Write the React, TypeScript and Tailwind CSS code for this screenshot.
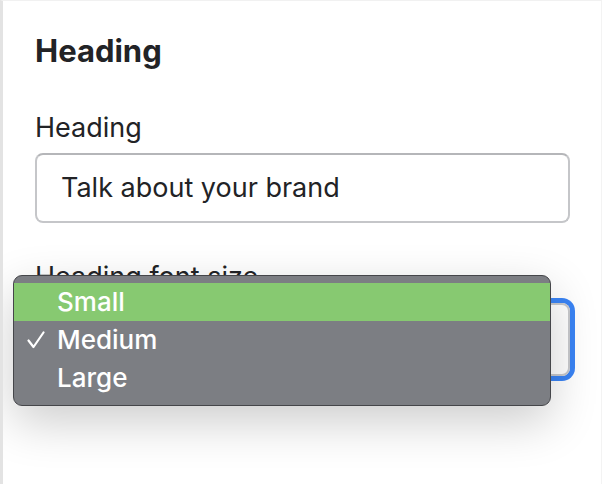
import { useState } from "react";

const options = ["Small", "Medium", "Large"];

export default function App() {
  const [selected] = useState("Medium");
  const [hovered] = useState("Small");

  return (
    <div
      className="relative w-[602px] h-[484px] overflow-hidden bg-white border-l-[3px] border-l-[#e3e3e3] border-t border-t-[#f1f1f1] border-r border-r-[#f3f3f3]"
      style={{ fontFamily: "Inter, 'Noto Sans', sans-serif" }}
    >
      <div className="px-[32px] pt-[31px]">
        {/* Section title */}
        <h2 className="text-[31px] leading-[38px] font-bold text-[#222326]">Heading</h2>

        {/* Heading text */}
        <label className="block mt-[41px] text-[27px] leading-[34px] text-[#222326]">Heading</label>
        <div className="mt-[8px] h-[70px] w-[535px] rounded-[8px] border-2 border-[#c5c6c9] border-t-[#b5b6b9] flex items-center px-[24px]">
          <span className="text-[27px] leading-[34px] text-[#222326]">Talk about your brand</span>
        </div>

        {/* Font size select (value hidden under the open menu) */}
        <label className="block mt-[37px] text-[27px] leading-[34px] text-[#222326]">Heading font size</label>
        <div className="mt-[9px] h-[73px] w-[535px] rounded-[8px] border-2 border-[#c8c9cc] ring-[5px] ring-[#3a84f5]" />
      </div>

      {/* Native-style dropdown menu */}
      <div className="absolute left-[10px] top-[274px] w-[538px] rounded-[9px] border border-[#45464a] bg-[#7c7e83] pt-[7px] pb-[8px] shadow-[0_16px_48px_rgba(0,0,0,0.2)]">
        {options.map((o) => (
          <div
            key={o}
            className={`relative h-[38px] flex items-center pl-[43px] text-[26px] leading-[32px] font-medium text-white ${
              o === hovered ? "bg-[#87c971]" : ""
            }`}
          >
            {o === selected && (
              <svg className="absolute left-[13px] top-[10px]" width="18" height="18" viewBox="0 0 18 18">
                <path d="M1.5 9.5 L6.5 16 L16.5 1.5" fill="none" stroke="white" strokeWidth="2.2" strokeLinecap="round" strokeLinejoin="round" />
              </svg>
            )}
            {o}
          </div>
        ))}
      </div>
    </div>
  );
}
